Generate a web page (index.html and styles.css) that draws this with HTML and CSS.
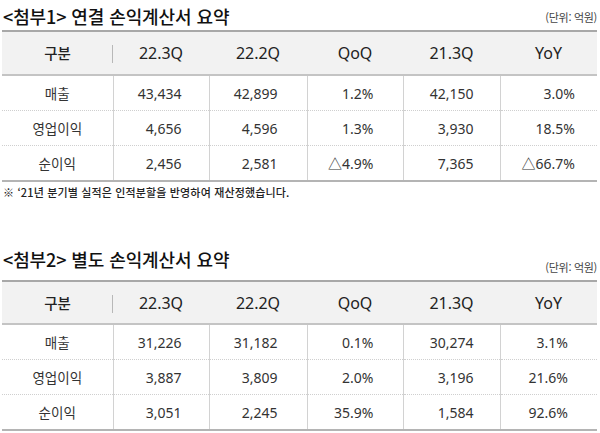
FILE: index.html
```html
<!DOCTYPE html>
<html lang="ko">
<head>
<meta charset="utf-8">
<link rel="stylesheet" href="styles.css">
</head>
<body>
<section class="block">
  <div class="head head-top">
    <h2 class="title">&lt;첨부1&gt; 연결 손익계산서 요약</h2>
    <span class="unit unit-top">(단위: 억원)</span>
  </div>
  <table class="fin">
    <colgroup>
      <col class="c0"><col class="c1"><col class="c2"><col class="c3"><col class="c4"><col class="c5">
    </colgroup>
    <thead>
      <tr><th class="first"><span class="kh">구분</span></th><th>22.3Q</th><th>22.2Q</th><th>QoQ</th><th>21.3Q</th><th>YoY</th></tr>
    </thead>
    <tbody>
      <tr><td class="label">매출</td><td>43,434</td><td>42,899</td><td>1.2%</td><td>42,150</td><td class="last">3.0%</td></tr>
      <tr><td class="label">영업이익</td><td>4,656</td><td>4,596</td><td>1.3%</td><td>3,930</td><td class="last">18.5%</td></tr>
      <tr><td class="label">순이익</td><td>2,456</td><td>2,581</td><td>△4.9%</td><td>7,365</td><td class="last">△66.7%</td></tr>
    </tbody>
  </table>
  <p class="note">※ ‘21년 분기별 실적은 인적분할을 반영하여 재산정했습니다.</p>
</section>
<section class="block block-2">
  <div class="head head-low">
    <h2 class="title">&lt;첨부2&gt; 별도 손익계산서 요약</h2>
    <span class="unit">(단위: 억원)</span>
  </div>
  <table class="fin fin-2">
    <colgroup>
      <col class="c0"><col class="c1"><col class="c2"><col class="c3"><col class="c4"><col class="c5">
    </colgroup>
    <thead>
      <tr><th class="first"><span class="kh">구분</span></th><th>22.3Q</th><th>22.2Q</th><th>QoQ</th><th>21.3Q</th><th>YoY</th></tr>
    </thead>
    <tbody>
      <tr><td class="label">매출</td><td>31,226</td><td>31,182</td><td>0.1%</td><td>30,274</td><td class="last">3.1%</td></tr>
      <tr><td class="label">영업이익</td><td>3,887</td><td>3,809</td><td>2.0%</td><td>3,196</td><td class="last">21.6%</td></tr>
      <tr><td class="label">순이익</td><td>3,051</td><td>2,245</td><td>35.9%</td><td>1,584</td><td class="last">92.6%</td></tr>
    </tbody>
  </table>
</section>
</body>
</html>
```

FILE: styles.css
```css
html, body {
  margin: 0;
  padding: 0;
  background: #ffffff;
}
body {
  width: 600px;
  height: 433px;
  overflow: hidden;
  font-family: "Noto Sans", "Noto Sans CJK KR", sans-serif;
  color: #333;
}
.block {
  padding-left: 2px;
  width: 595px;
}
.head {
  display: flex;
  justify-content: space-between;
}
.head-top {
  height: 30px;
  align-items: center;
}
.head-low {
  align-items: flex-end;
  padding-bottom: 6px;
}
.title {
  margin: 0;
  padding-left: 1px;
  font-family: "Noto Sans CJK KR", sans-serif;
  font-size: 18px;
  font-weight: 500;
  line-height: 22px;
  color: #111;
  letter-spacing: -0.1px;
}
.head-top .title {
  padding-top: 2px;
}
.head-low .title {
  margin-bottom: 4px;
}
.unit {
  font-family: "Noto Sans CJK KR", sans-serif;
  font-size: 11px;
  line-height: 14px;
  color: #444;
  letter-spacing: -0.3px;
}
.unit-top {
  padding-top: 4px;
}
.fin {
  width: 595px;
  border-collapse: collapse;
  table-layout: fixed;
  border-top: 2px solid #a8a8a8;
  border-bottom: 2px solid #b4b4b4;
}
.c0 { width: 111px; }
.c1 { width: 96px; }
.c2 { width: 98px; }
.c3 { width: 96px; }
.c4 { width: 97px; }
.c5 { width: 97px; }
.fin th {
  height: 42px;
  padding: 0;
  background: #f2f2f2;
  font-size: 16px;
  font-weight: 400;
  color: #222;
  text-align: center;
  border-bottom: 2px solid #c4c4c4;
}
.fin-2 th {
  height: 41px;
}
.fin th.first {
  position: relative;
}
.fin th.first::after {
  content: "";
  position: absolute;
  right: 0;
  top: 13px;
  height: 18px;
  border-right: 1px solid #b8b8b8;
}
.kh {
  font-family: "Noto Sans CJK KR", sans-serif;
  font-size: 14.5px;
  font-weight: 500;
}
.fin td {
  height: 34px;
  padding: 0 27px 0 0;
  font-size: 14px;
  color: #333;
  text-align: right;
  border-left: 1px solid #d2d2d2;
  border-bottom: 1px dotted #cfcfcf;
}
.fin tbody tr:last-child td {
  border-bottom: none;
}
.fin td.label {
  padding: 0;
  text-align: center;
  border-left: none;
  font-family: "Noto Sans CJK KR", sans-serif;
  font-size: 13.5px;
  color: #333;
}
.fin td:nth-child(3),
.fin td:nth-child(4) {
  padding-right: 29px;
}
.fin td:nth-child(5) {
  padding-right: 26px;
}
.fin td.last {
  padding-right: 22px;
}
.fin-2 td.last {
  padding-right: 29px;
}
.note {
  margin: 3px 0 0;
  padding-left: 1px;
  font-family: "Noto Sans CJK KR", sans-serif;
  font-size: 11px;
  line-height: 14px;
  font-weight: 500;
  color: #222;
  letter-spacing: 0.15px;
}
.block-2 .head-low {
  margin-top: 49px;
}
```
